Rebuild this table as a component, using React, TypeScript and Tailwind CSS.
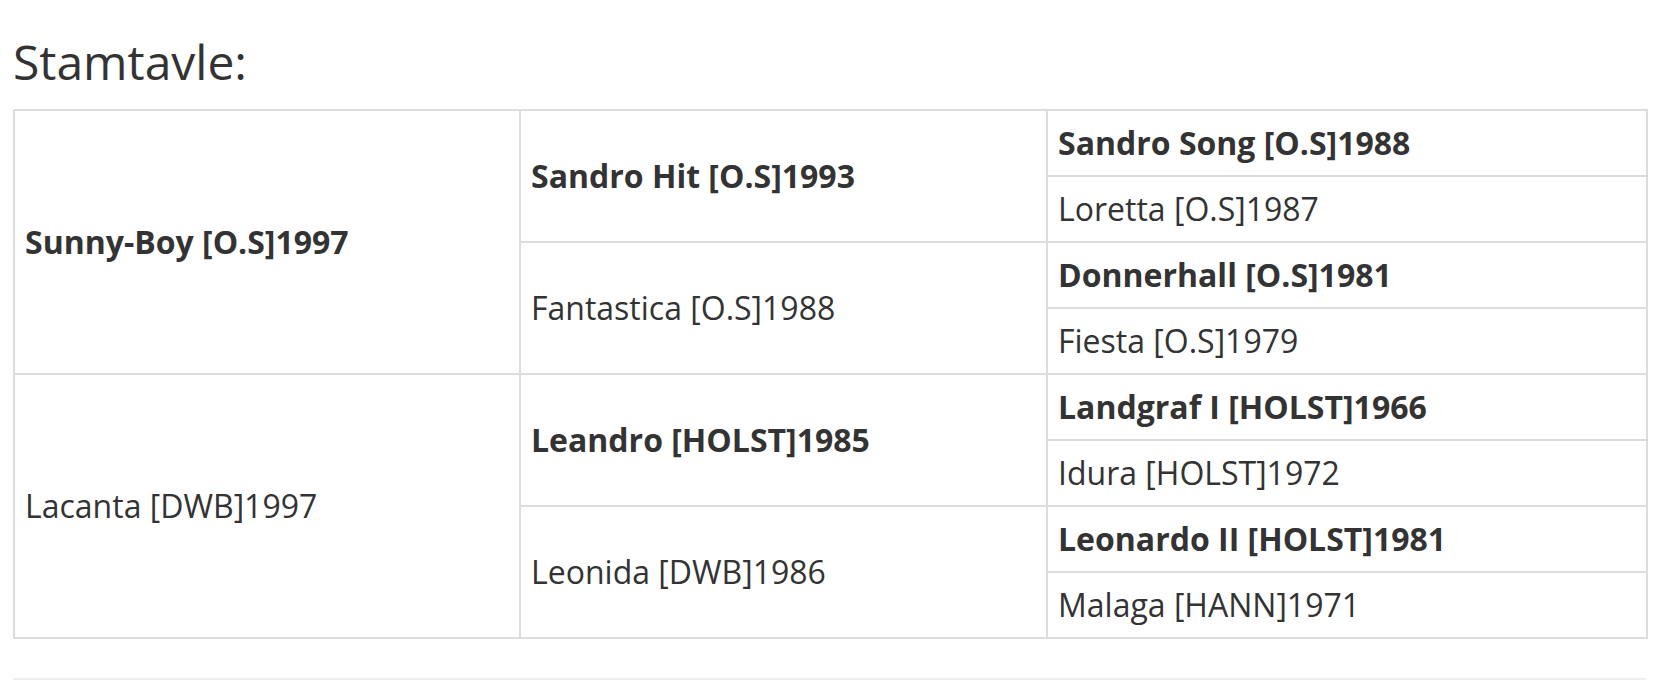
const rows: { name: string; bold: boolean }[] = [
  { name: "Sandro Song [O.S]1988", bold: true },
  { name: "Loretta [O.S]1987", bold: false },
  { name: "Donnerhall [O.S]1981", bold: true },
  { name: "Fiesta [O.S]1979", bold: false },
  { name: "Landgraf I [HOLST]1966", bold: true },
  { name: "Idura [HOLST]1972", bold: false },
  { name: "Leonardo II [HOLST]1981", bold: true },
  { name: "Malaga [HANN]1971", bold: false },
];

const parents = [
  { name: "Sunny-Boy [O.S]1997", bold: true },
  { name: "Lacanta [DWB]1997", bold: false },
];

const grandparents = [
  { name: "Sandro Hit [O.S]1993", bold: true },
  { name: "Fantastica [O.S]1988", bold: false },
  { name: "Leandro [HOLST]1985", bold: true },
  { name: "Leonida [DWB]1986", bold: false },
];

function Cell({ name, bold, span, row, col }: { name: string; bold: boolean; span: number; row: number; col: number }) {
  return (
    <div
      className={`bg-white flex items-center px-[10px] text-[32px] leading-[40px] text-[#333] ${bold ? "font-bold" : "font-normal"}`}
      style={{ gridRow: `${row} / span ${span}`, gridColumn: col }}
    >
      {name}
    </div>
  );
}

export default function App() {
  return (
    <div className="bg-white min-h-screen px-[13px] pt-[32px] font-['Open_Sans',sans-serif] text-[#333]">
      <h2 className="text-[48px] leading-[60px] font-normal mb-[17px]">Stamtavle:</h2>
      <div className="grid grid-cols-[504px_525px_598px] auto-rows-[64px] gap-[2px] p-[2px] bg-[#ddd] w-[1635px]">
        {parents.map((p, i) => (
          <Cell key={p.name} name={p.name} bold={p.bold} span={4} row={i * 4 + 1} col={1} />
        ))}
        {grandparents.map((g, i) => (
          <Cell key={g.name} name={g.name} bold={g.bold} span={2} row={i * 2 + 1} col={2} />
        ))}
        {rows.map((r, i) => (
          <Cell key={r.name} name={r.name} bold={r.bold} span={1} row={i + 1} col={3} />
        ))}
      </div>
      <hr className="mt-[39px] w-[1633px] border-t-2 border-[#eee]" />
    </div>
  );
}
